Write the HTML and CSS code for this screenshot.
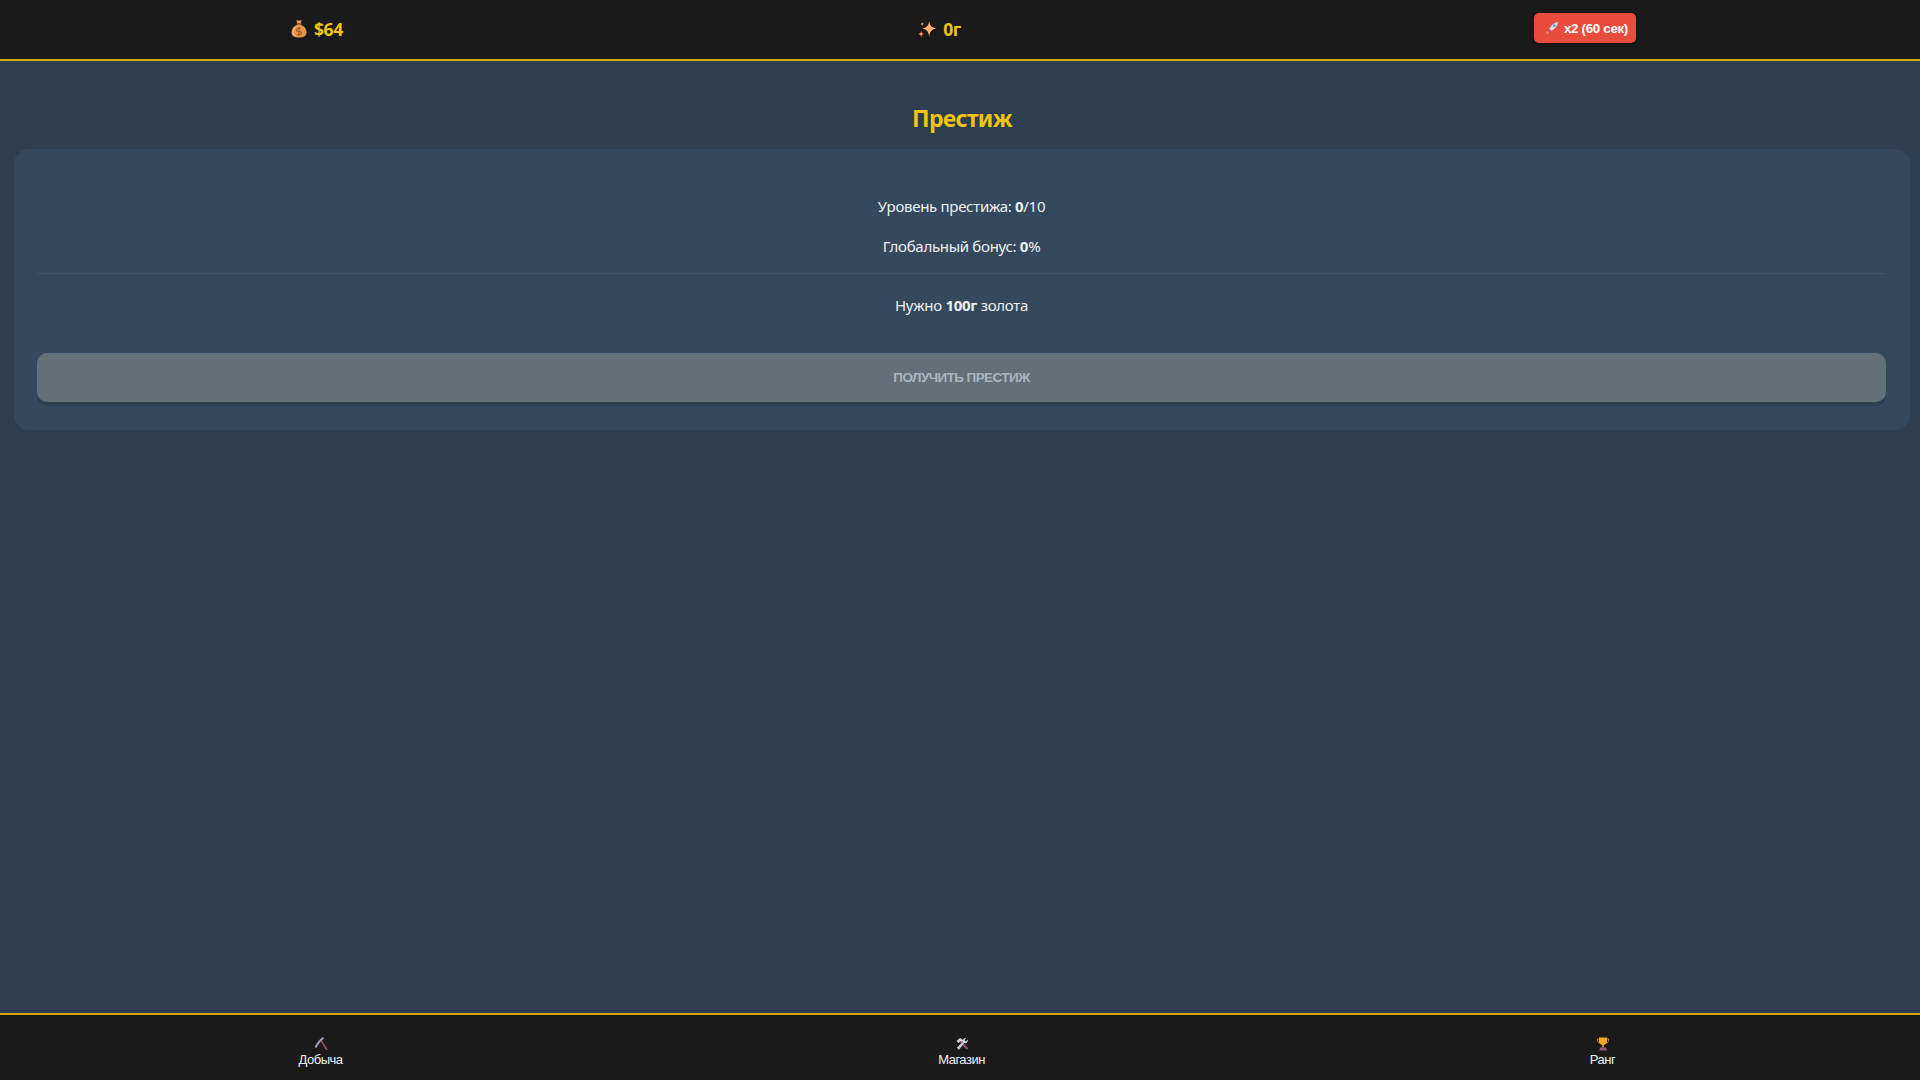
FILE: index.html
```html
<!DOCTYPE html>
<html lang="ru">
<head>
<meta charset="utf-8">
<title>Престиж</title>
<link rel="stylesheet" href="styles.css">
</head>
<body>
<header class="topbar">
  <div class="stat">
    <svg class="stat-icon" viewBox="-4 -2 22 22"><path d="M5.300 .5h5.400l-1 3H6.300z" fill="#ec9c48"/><rect x="5.500" y="3.400" width="5" height="1.300" fill="#a8642a"/><path d="M8 4.500c4 0 7.500 3.800 7.500 8 0 3.800-3.500 5-7.500 5s-7.500-1.200-7.500-5c0-4.200 3.500-8 7.500-8z" fill="#e8934a"/><path d="M4.500 7c-1.500 1.200-2.500 3-2.500 5.500 0 1.500 1 2.500 2.500 3" stroke="#f7bd85" stroke-width="1.300" fill="none"/><path d="M10 8.500H7a1.300 1.300 0 0 0 0 3h2a1.300 1.300 0 0 1 0 3H6M8 7v9" stroke="#a85c22" stroke-width="1.100" fill="none"/></svg>
    <span>$64</span>
  </div>
  <div class="stat">
    <svg class="stat-icon" viewBox="-1.500 -2 20 20"><path d="M10.500 .5c.6 4.500 1.800 6 6.200 7-4.400 1-5.600 3-6.200 7.500-.6-4.500-1.800-6.500-6.200-7.500 4.400-1 5.600-2.500 6.200-7z" fill="#ffb36b"/><path d="M3.200 9.500c.3 2 .8 2.500 2.700 3-1.900.5-2.400 1-2.700 3-.3-2-.8-2.500-2.700-3 1.900-.5 2.400-1 2.700-3z" fill="#f58c5e"/><path d="M4.200 1.500c.2 1.300.6 1.700 1.800 2-1.200.3-1.600.7-1.800 2-.2-1.300-.6-1.700-1.800-2 1.200-.3 1.600-.7 1.800-2z" fill="#e8a060"/></svg>
    <span>0г</span>
  </div>
  <button class="boost" type="button">
    <svg class="boost-icon" viewBox="0 0 16 16"><path d="M1.500 14.500c0-2.200.6-3.700 2-4.400l2.400 2.400c-.7 1.400-2.200 2-4.400 2z" fill="#f6a623"/><path d="M3.500 8.500l2.200-.5 2.300 2.300-.5 2.200L5.500 14.500l-4-4z" fill="#e0457b"/><path d="M5 8.800C7 4.500 10.500 1.800 15 1c-.8 4.500-3.500 8-7.800 10z" fill="#dde1e8"/><circle cx="10.500" cy="5.500" r="1.700" fill="#5aa5dc"/></svg>
    <span>x2 (60 сек)</span>
  </button>
</header>

<main class="content">
  <h1 class="title">Престиж</h1>
  <section class="card">
    <p class="line">Уровень престижа: <b>0</b>/10</p>
    <p class="line second">Глобальный бонус: <b>0</b>%</p>
    <hr class="divider">
    <p class="line need">Нужно <b>100г</b> золота</p>
    <button class="prestige" type="button">Получить престиж</button>
  </section>
</main>

<nav class="tabbar">
  <div class="tab">
    <svg class="tab-icon" viewBox="0 0 14 14"><path d="M7 3.500L13 13" stroke="#8c4a55" stroke-width="1.700" fill="none"/><path d="M1.500 10.500Q5 3.500 9.500 .8" stroke="#ab97b8" stroke-width="2" fill="none"/></svg>
    <span>Добыча</span>
  </div>
  <div class="tab">
    <svg class="tab-icon" viewBox="0 0 14 14"><path d="M5.500 4.500L12.500 12" stroke="#8c4a72" stroke-width="2.400" fill="none"/><path d="M1.500 4L5 1l3.500 2.200-1.500 1.800-1.500-1-2 2z" fill="#d6d6de"/><path d="M12.800 2.500a2.800 2.800 0 0 1-3.500 3.500L4 12.800 1.800 10.800 7.800 5A2.800 2.800 0 0 1 11 1.200L9.500 3l1.500 1.500z" fill="#cfcfda"/></svg>
    <span>Магазин</span>
  </div>
  <div class="tab">
    <svg class="tab-icon" viewBox="0 0 14 14"><path d="M3.500 2H1.500v1.500C1.500 5.200 2.800 6 4.500 6.300M10.500 2h2v1.500c0 1.700-1.300 2.500-3 2.800" stroke="#c98a24" stroke-width="1" fill="none"/><path d="M3 .5h8v3.800C11 6.800 9.300 8 7 8S3 6.800 3 4.300z" fill="#f5a623"/><rect x="6" y="8" width="2" height="2.500" fill="#c98a24"/><path d="M4 10.500h6l.8 3H3.200z" fill="#8c5a7a"/></svg>
    <span>Ранг</span>
  </div>
</nav>
</body>
</html>
```
FILE: styles.css
```css
* { box-sizing: border-box; }
html, body { height: 100%; }
body {
  margin: 0;
  display: flex;
  flex-direction: column;
  background: #2c3e50;
  color: #ecf0f1;
  font-family: "Noto Sans", "Open Sans", sans-serif;
  overflow: hidden;
}
.topbar {
  height: 61px;
  flex: none;
  display: flex;
  justify-content: space-between;
  align-items: center;
  background: #1a1a1a;
  border-bottom: 2px solid #d4a912;
  padding: 0 284px 1px 287px;
}
.stat {
  display: flex;
  align-items: center;
  gap: 5px;
  color: #f1c40f;
  font-size: 17.5px;
  font-weight: 700;
  letter-spacing: -.4px;
}
.stat-icon { width: 22px; height: 22px; }
.boost {
  display: flex;
  align-items: center;
  gap: 5px;
  width: 102px;
  height: 30px;
  margin-bottom: 2px;
  padding: 0 0 0 11px;
  border: 0;
  border-radius: 5px;
  background: #e74c3c;
  color: #fff;
  font-family: "Liberation Sans", Arial, sans-serif;
  font-size: 13.3px;
  font-weight: 700;
  letter-spacing: -.3px;
  box-shadow: 0 2px 4px rgba(0,0,0,.3);
  flex: none;
}
.boost-icon { width: 14px; height: 14px; }
.content {
  flex: 1;
  padding: 40px 10px 0 14px;
}
.title {
  margin: 0 0 14px;
  text-align: center;
  color: #f1c40f;
  font-size: 23px;
  line-height: 34px;
  font-weight: 700;
  letter-spacing: -.7px;
}
.card {
  height: 281px;
  padding: 46px 24px 0 23px;
  border-radius: 15px;
  background: #34495e;
  text-align: center;
}
.line {
  margin: 0 0 18px;
  font-size: 15px;
  line-height: 22px;
  letter-spacing: -.3px;
}
.second { margin-bottom: 16px; }
.divider {
  height: 1px;
  margin: 0 0 20px;
  border: 0;
  background: #3f5468;
}
.need { margin-bottom: 37px; }
.prestige {
  display: block;
  width: 100%;
  height: 49px;
  border: 0;
  border-radius: 10px;
  background: #637078;
  color: #a9b5bf;
  font-family: "Liberation Sans", Arial, sans-serif;
  font-size: 13.5px;
  font-weight: 700;
  letter-spacing: -.6px;
  text-transform: uppercase;
  box-shadow: 0 4px 0 #2e3f50;
}
.tabbar {
  height: 67px;
  flex: none;
  display: flex;
  background: #1a1a1a;
  border-top: 2px solid #d4a912;
  padding-top: 22px;
}
.tab {
  flex: 0 0 641px;
  display: flex;
  flex-direction: column;
  align-items: center;
  color: #ecf0f1;
  font-family: "Liberation Sans", Arial, sans-serif;
  font-size: 13px;
  line-height: 16px;
  letter-spacing: -.5px;
}
.tab-icon { width: 14px; height: 14px; display: block; margin-bottom: 1px; }
```
